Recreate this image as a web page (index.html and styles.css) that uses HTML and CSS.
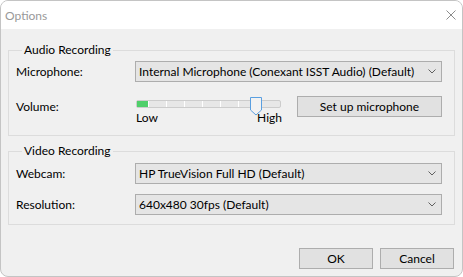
FILE: index.html
```html
<!DOCTYPE html>
<html lang="en">
<head>
    <meta charset="UTF-8">
    <title>Options</title>
    <link rel="stylesheet" href="styles.css">
</head>
<body>
    <div class="window">
        <!-- Title bar -->
        <div class="titlebar">
            <span class="title">Options</span>
            <svg class="close" width="10" height="10" viewBox="0 0 10 10">
                <path d="M0.5 0.5 L9.5 9.5 M9.5 0.5 L0.5 9.5" stroke="#8c8c8c" stroke-width="1" fill="none"/>
            </svg>
        </div>

        <div class="content">
            <!-- Audio -->
            <fieldset class="group audio">
                <legend>Audio Recording</legend>
                <div class="row">
                    <label class="field-label">Microphone:</label>
                    <div class="combo">
                        <span>Internal Microphone (Conexant ISST Audio) (Default)</span>
                        <svg class="chevron" width="8" height="5" viewBox="0 0 8 5"><path d="M0.5 0.5 L4 4 L7.5 0.5" stroke="#606060" fill="none"/></svg>
                    </div>
                </div>
                <div class="row volume">
                    <label class="field-label">Volume:</label>
                    <div class="slider">
                        <svg width="147" height="14" viewBox="0 0 147 14">
                            <rect x="1.5" y="4.5" width="144" height="7" rx="1.5" fill="#e7e7e7" stroke="#cccccc"/>
                            <rect x="2" y="5" width="11" height="6" fill="#4fcf6a"/>
                            <g stroke="#ffffff" stroke-width="1">
                                <line x1="13.5" y1="5" x2="13.5" y2="11"/>
                                <line x1="31.5" y1="5" x2="31.5" y2="11"/>
                                <line x1="49.5" y1="5" x2="49.5" y2="11"/>
                                <line x1="67.5" y1="5" x2="67.5" y2="11"/>
                                <line x1="85.5" y1="5" x2="85.5" y2="11"/>
                                <line x1="103.5" y1="5" x2="103.5" y2="11"/>
                                <line x1="121.5" y1="5" x2="121.5" y2="11"/>
                            </g>
                            <path d="M115.5 1.5 H126.5 V14 L121 19 L115.5 14 Z" fill="#f2f2f2" stroke="#5a9fe0"/>
                        </svg>
                        <div class="slider-labels">
                            <span>Low</span>
                            <span>High</span>
                        </div>
                    </div>
                    <button class="btn setup">Set up microphone</button>
                </div>
            </fieldset>

            <!-- Video -->
            <fieldset class="group video">
                <legend>Video Recording</legend>
                <div class="row">
                    <label class="field-label">Webcam:</label>
                    <div class="combo">
                        <span>HP TrueVision Full HD (Default)</span>
                        <svg class="chevron" width="8" height="5" viewBox="0 0 8 5"><path d="M0.5 0.5 L4 4 L7.5 0.5" stroke="#606060" fill="none"/></svg>
                    </div>
                </div>
                <div class="row">
                    <label class="field-label">Resolution:</label>
                    <div class="combo">
                        <span>640x480 30fps (Default)</span>
                        <svg class="chevron" width="8" height="5" viewBox="0 0 8 5"><path d="M0.5 0.5 L4 4 L7.5 0.5" stroke="#606060" fill="none"/></svg>
                    </div>
                </div>
            </fieldset>

            <!-- Dialog buttons -->
            <div class="actions">
                <button class="btn dialog-btn">OK</button>
                <button class="btn dialog-btn">Cancel</button>
            </div>
        </div>
    </div>
</body>
</html>
```
FILE: styles.css
```css
/* Global */
body {
    margin: 0;
    padding: 0;
    font-family: 'Lato', 'Noto Sans', sans-serif;
    font-size: 12px;
    color: #000;
    background: #ffffff;
}

/* Window frame */
.window {
    width: 463px;
    height: 277px;
    box-sizing: border-box;
    border: 1px solid #c4c4c4;
    border-radius: 8px;
    overflow: hidden;
    display: flex;
    flex-direction: column;
    background: #f0f0f0;
}

.titlebar {
    height: 28px;
    flex-shrink: 0;
    background: #ffffff;
    display: flex;
    align-items: center;
    justify-content: space-between;
    padding: 0 6px 0 4px;
}

.title {
    color: #999999;
    font-size: 12px;
}

/* Content */
.content {
    flex: 1;
    padding: 13px 7px 0 7px;
    display: flex;
    flex-direction: column;
}

/* Group boxes */
.group {
    margin: 0;
    padding: 0 12px 0 7px;
    border: 1px solid #dcdcdc;
    min-width: 0;
}

.group legend {
    margin-left: 6px;
    padding: 0 2px;
    line-height: 16px;
}

.audio {
    padding-bottom: 9px;
}

.video {
    margin-top: 7px;
    padding-bottom: 9px;
}

.row {
    display: flex;
    align-items: center;
    margin-top: 3px;
}

.video .row {
    margin-top: 4px;
}

.video .row + .row {
    margin-top: 10px;
}

.field-label {
    width: 119px;
    flex-shrink: 0;
}

.combo {
    flex: 1;
    height: 21px;
    box-sizing: border-box;
    border: 1px solid #adadad;
    background: #e5e5e5;
    display: flex;
    align-items: center;
    justify-content: space-between;
    padding: 0 5px 0 3px;
    white-space: nowrap;
}

.chevron {
    margin-bottom: 1px;
}

/* Volume row */
.row.volume {
    margin-top: 14px;
    align-items: flex-start;
}

.row.volume .field-label {
    line-height: 21px;
}

.slider {
    width: 147px;
}

.slider svg {
    display: block;
    overflow: visible;
}

.slider-labels {
    display: flex;
    justify-content: space-between;
    line-height: 16px;
    padding: 0 0 0 1px;
}

/* Buttons */
.btn {
    font-family: inherit;
    font-size: 12px;
    color: #000;
    background: #e1e1e1;
    border: 1px solid #adadad;
    border-radius: 0;
    height: 21px;
    padding: 0;
    box-sizing: border-box;
}

.setup {
    width: 147px;
    margin-left: 15px;
}

.actions {
    margin-top: 23px;
    display: flex;
    justify-content: flex-end;
    gap: 7px;
    padding-right: 1px;
}

.dialog-btn {
    width: 74px;
}
```
